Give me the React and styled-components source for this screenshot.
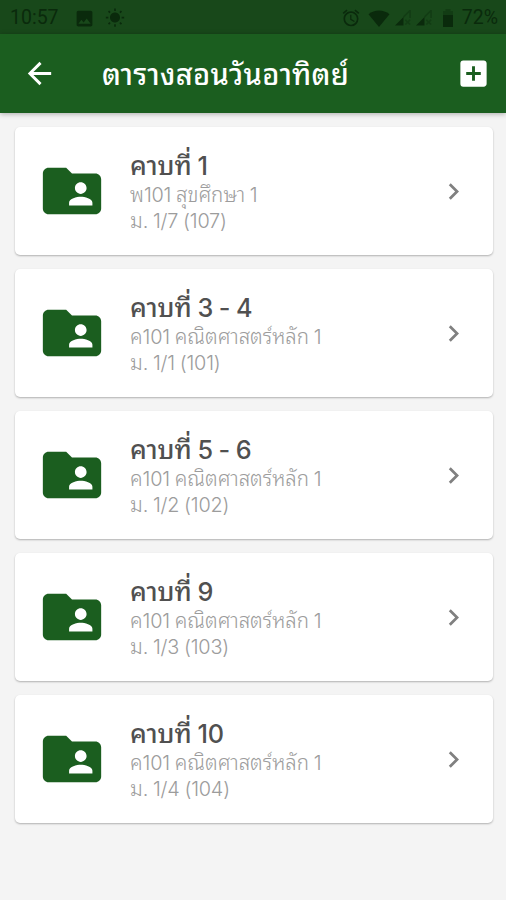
import React from "react";
import styled, { createGlobalStyle } from "styled-components";
import {
  MdAddBox,
  MdArrowBack,
  MdChevronRight,
  MdFolderShared,
  MdAlarm,
  MdImage,
  MdWbSunny,
} from "react-icons/md";

const GlobalStyle = createGlobalStyle`
  *, *::before, *::after { box-sizing: border-box; }
  body { margin: 0; background: #f4f4f4; }
`;

const Screen = styled.div`
  width: 506px;
  height: 900px;
  overflow: hidden;
  display: flex;
  flex-direction: column;
  background: #f4f4f4;
  font-family: Inter, "Noto Sans Thai Looped", "Noto Looped Thai", Loma, Garuda, sans-serif;
`;

const StatusBar = styled.div`
  flex: none;
  height: 34px;
  display: flex;
  align-items: center;
  padding: 2px 8px 0 10px;
  background: #18481a;
  color: #0a2a0c;
  font-family: Roboto, sans-serif;
  font-size: 19.5px;
  line-height: 32px;
  svg { display: block; flex: none; }
`;

const StatusGroup = styled.div`
  display: flex;
  align-items: center;
  gap: ${(p) => p.$gap}px;
  margin-left: ${(p) => (p.$end ? "auto" : "0")};
`;

const LeftIcons = styled.div`
  display: flex;
  align-items: center;
  gap: 10px;
  margin-left: 4px;
`;

const Signals = styled.div`
  display: flex;
  gap: 5px;
  margin: 0 3px 0 -3px;
`;

const AppBar = styled.header`
  flex: none;
  height: 79px;
  display: flex;
  align-items: center;
  padding: 0 15.5px 0 22px;
  background: #1b5e1f;
  color: #fff;
  box-shadow: 0 1px 5px rgba(0, 0, 0, 0.3);
  svg { display: block; flex: none; }
`;

const PageTitle = styled.h1`
  flex: 1;
  margin: 0 0 0 45px;
  padding-top: 2px;
  font-size: 29px;
  font-weight: 500;
  letter-spacing: 0.3px;
  line-height: 40px;
  white-space: nowrap;
`;

const List = styled.main`
  display: flex;
  flex-direction: column;
  gap: 14px;
  padding: 14px 13px 0 15px;
`;

const Card = styled.article`
  height: 128px;
  display: flex;
  align-items: center;
  padding: 0 23.5px 0 22px;
  background: #fff;
  border-radius: 5px;
  box-shadow: 0 1px 2px rgba(0, 0, 0, 0.28);
  svg { display: block; flex: none; }
`;

const Details = styled.div`
  flex: 1;
  padding: 1px 0 0 23px;
  white-space: nowrap;
`;

const Period = styled.h2`
  margin: 0;
  color: #505050;
  font-size: 26px;
  font-weight: 500;
  line-height: 31px;
`;

const Line = styled.p`
  margin: 0;
  color: #9c9c9c;
  font-size: 20.5px;
  font-weight: 300;
  line-height: 25px;
`;

const Numerals = styled.span`
  font-size: 0.97em;
  letter-spacing: -0.01em;
  word-spacing: -0.03em;
`;

const MixedText = ({ children }) =>
  children
    .split(/([ -~]+)/)
    .map((part, i) => (i % 2 ? <Numerals key={i}>{part}</Numerals> : part));

const WifiIcon = () => (
  <svg width="22" height="17" viewBox="0 0 22 17">
    <path d="M11 17 0.5 4.2C6.5-.8 15.5-.8 21.5 4.2Z" fill="currentColor" />
  </svg>
);

const SignalIcon = () => (
  <svg width="16" height="16" viewBox="0 0 17 16">
    <path d="M0 16 9 7v9Z" fill="currentColor" />
    <path
      d="M9 7 16 0v8M11 10l5 5m0-5-5 5"
      fill="none"
      stroke="currentColor"
      strokeWidth="1.6"
      opacity=".4"
    />
  </svg>
);

const BatteryIcon = () => (
  <svg width="12" height="18" viewBox="0 0 12 18">
    <path d="M3.5 0h5v2H11v4H1V2h2.5Z" fill="currentColor" opacity=".4" />
    <path d="M1 6h10v12H1Z" fill="currentColor" />
  </svg>
);

const periods = [
  { period: "คาบที่ 1", subject: "พ101 สุขศึกษา 1", room: "ม. 1/7 (107)" },
  { period: "คาบที่ 3 - 4", subject: "ค101 คณิตศาสตร์หลัก 1", room: "ม. 1/1 (101)" },
  { period: "คาบที่ 5 - 6", subject: "ค101 คณิตศาสตร์หลัก 1", room: "ม. 1/2 (102)" },
  { period: "คาบที่ 9", subject: "ค101 คณิตศาสตร์หลัก 1", room: "ม. 1/3 (103)" },
  { period: "คาบที่ 10", subject: "ค101 คณิตศาสตร์หลัก 1", room: "ม. 1/4 (104)" },
];

export default function App() {
  return (
    <Screen>
      <GlobalStyle />
      <StatusBar>
        <StatusGroup $gap={11}>
          <span>10:57</span>
          <LeftIcons>
            <MdImage size={21} />
            <MdWbSunny size={20} />
          </LeftIcons>
        </StatusGroup>
        <StatusGroup $gap={7.5} $end>
          <MdAlarm size={20} />
          <WifiIcon />
          <Signals>
            <SignalIcon />
            <SignalIcon />
          </Signals>
          <BatteryIcon />
          <span>72%</span>
        </StatusGroup>
      </StatusBar>
      <AppBar>
        <MdArrowBack size={35} />
        <PageTitle>ตารางสอนวันอาทิตย์</PageTitle>
        <MdAddBox size={35} />
      </AppBar>
      <List>
        {periods.map((item) => (
          <Card key={item.period}>
            <MdFolderShared size={70} color="#1b5e1f" />
            <Details>
              <Period>
                <MixedText>{item.period}</MixedText>
              </Period>
              <Line>
                <MixedText>{item.subject}</MixedText>
              </Line>
              <Line>
                <MixedText>{item.room}</MixedText>
              </Line>
            </Details>
            <MdChevronRight size={33} color="#808080" />
          </Card>
        ))}
      </List>
    </Screen>
  );
}
